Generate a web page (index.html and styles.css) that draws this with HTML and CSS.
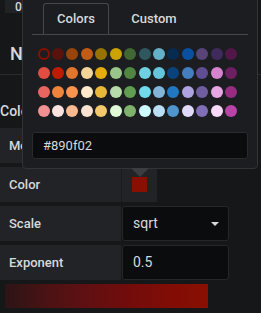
FILE: index.html
```html
<!DOCTYPE html>
<html>
<head>
<meta charset="utf-8">
<link rel="stylesheet" href="styles.css">
</head>
<body>
<div class="page">
  <div class="top-input">0</div>
  <h2 class="heading">Null value</h2>
  <div class="sep"></div>
  <h3 class="section">Colors</h3>
  <div class="form-row">
    <div class="label">Mode</div>
    <div class="select">opacity<span class="caret"></span></div>
  </div>
  <div class="form-row">
    <div class="label">Color</div>
    <div class="swatch-cell"><span class="swatch"></span></div>
  </div>
  <div class="form-row">
    <div class="label">Scale</div>
    <div class="select">sqrt<span class="caret"></span></div>
  </div>
  <div class="form-row">
    <div class="label">Exponent</div>
    <div class="select">0.5</div>
  </div>
  <div class="legend"></div>
</div>

<div class="popover">
  <div class="tabs">
    <div class="tab active">Colors</div>
    <div class="tab second">Custom</div>
  </div>
  <div class="palette">
    <span class="dot ring" style="border-color:#890F02"></span>
    <span class="dot" style="background:#58140C"></span>
    <span class="dot" style="background:#99440A"></span>
    <span class="dot" style="background:#C15C17"></span>
    <span class="dot" style="background:#967302"></span>
    <span class="dot" style="background:#CCA300"></span>
    <span class="dot" style="background:#3F6833"></span>
    <span class="dot" style="background:#2F575E"></span>
    <span class="dot" style="background:#64B0C8"></span>
    <span class="dot" style="background:#052B51"></span>
    <span class="dot" style="background:#0A50A1"></span>
    <span class="dot" style="background:#584477"></span>
    <span class="dot" style="background:#3F2B5B"></span>
    <span class="dot" style="background:#511749"></span>

    <span class="dot" style="background:#E24D42"></span>
    <span class="dot" style="background:#BF1B00"></span>
    <span class="dot" style="background:#E0752D"></span>
    <span class="dot" style="background:#F4D598"></span>
    <span class="dot" style="background:#E5AC0E"></span>
    <span class="dot" style="background:#9AC48A"></span>
    <span class="dot" style="background:#508642"></span>
    <span class="dot" style="background:#6ED0E0"></span>
    <span class="dot" style="background:#65C5DB"></span>
    <span class="dot" style="background:#0A437C"></span>
    <span class="dot" style="background:#447EBC"></span>
    <span class="dot" style="background:#614D93"></span>
    <span class="dot" style="background:#D683CE"></span>
    <span class="dot" style="background:#6D1F62"></span>

    <span class="dot" style="background:#EA6460"></span>
    <span class="dot" style="background:#EF843C"></span>
    <span class="dot" style="background:#F9934E"></span>
    <span class="dot" style="background:#FCEACA"></span>
    <span class="dot" style="background:#EAB839"></span>
    <span class="dot" style="background:#B7DBAB"></span>
    <span class="dot" style="background:#629E51"></span>
    <span class="dot" style="background:#70DBED"></span>
    <span class="dot" style="background:#82B5D8"></span>
    <span class="dot" style="background:#1F78C1"></span>
    <span class="dot" style="background:#AEA2E0"></span>
    <span class="dot" style="background:#705DA0"></span>
    <span class="dot" style="background:#E5A8E2"></span>
    <span class="dot" style="background:#962D82"></span>

    <span class="dot" style="background:#F29191"></span>
    <span class="dot" style="background:#FCE2DE"></span>
    <span class="dot" style="background:#F9BA8F"></span>
    <span class="dot" style="background:#F9E2D2"></span>
    <span class="dot" style="background:#F2C96D"></span>
    <span class="dot" style="background:#E0F9D7"></span>
    <span class="dot" style="background:#7EB26D"></span>
    <span class="dot" style="background:#CFFAFF"></span>
    <span class="dot" style="background:#BADFF4"></span>
    <span class="dot" style="background:#5195CE"></span>
    <span class="dot" style="background:#DEDAF7"></span>
    <span class="dot" style="background:#806EB7"></span>
    <span class="dot" style="background:#F9D9F9"></span>
    <span class="dot" style="background:#BA43A9"></span>
  </div>
  <div class="hex-input">#890f02</div>
  <div class="arrow"></div>
</div>
</body>
</html>
```

FILE: styles.css
```css
* {
  box-sizing: border-box;
}

html,
body {
  margin: 0;
  padding: 0;
}

body {
  width: 261px;
  height: 313px;
  overflow: hidden;
  position: relative;
  background: #161719;
  color: #d8d9da;
  font-family: Roboto, "Liberation Sans", sans-serif;
}

.page {
  display: flex;
  flex-direction: column;
  align-items: flex-start;
}

.top-input {
  margin-left: 5px;
  width: 22px;
  height: 13px;
  padding-left: 10px;
  background: #202226;
  font-size: 12px;
  line-height: 14px;
  font-weight: 500;
  overflow: hidden;
}

.heading {
  margin: 29px 0 0 10px;
  font-size: 18px;
  line-height: 24px;
  font-weight: 500;
  white-space: nowrap;
}

.sep {
  align-self: stretch;
  height: 1px;
  margin-top: 8px;
  background: #2a2b2e;
}

.section {
  margin: 28px 0 0 0;
  font-size: 14px;
  line-height: 16px;
  font-weight: 500;
}

.form-row {
  display: flex;
  height: 35px;
  margin-top: 4px;
}

.section + .form-row {
  margin-top: 9px;
}

.label {
  width: 121px;
  padding-left: 9px;
  background: #212327;
  font-size: 13px;
  line-height: 35px;
  font-weight: 500;
}

.swatch-cell {
  width: 36px;
  display: flex;
  align-items: center;
  justify-content: center;
  background: #212327;
  border-left: 1px solid #1a1b1e;
}

.swatch {
  width: 15px;
  height: 15px;
  background: #890f02;
}

.select {
  position: relative;
  width: 107px;
  margin-left: 1px;
  padding-left: 10px;
  background: #0b0c0e;
  border: 1px solid #26272b;
  border-radius: 3px;
  font-size: 14px;
  line-height: 33px;
}

.caret {
  position: absolute;
  right: 9px;
  top: 15px;
  border-left: 4px solid transparent;
  border-right: 4px solid transparent;
  border-top: 4px solid #d8d9da;
}

.legend {
  margin: 4px 0 0 5px;
  width: 203px;
  height: 24px;
  background: linear-gradient(to right, #2c1416 0%, #4a1214 20%, #5e1012 38%, #730c0b 62%, #820d05 82%, #890f02 100%);
}

/* popover */
.popover {
  position: absolute;
  left: 22px;
  top: -6px;
  width: 236px;
  padding: 8px 9px 9px;
  background: #1c1d20;
  border: 1px solid #323336;
  border-radius: 4px;
}

.tabs {
  display: flex;
  padding-left: 11px;
  border-bottom: 1px solid #46474a;
}

.tab {
  padding: 7px 0;
  font-size: 13px;
  line-height: 16px;
  font-weight: 500;
  text-align: center;
  border: 1px solid transparent;
  border-bottom: none;
  border-radius: 3px 3px 0 0;
}

.tab.active {
  width: 66px;
  border-color: #46474a;
}

.tab.second {
  width: 72px;
  margin-left: 9px;
}

.palette {
  display: grid;
  grid-template-columns: repeat(14, 12px);
  column-gap: 2.44px;
  row-gap: 7px;
  margin-top: 13px;
  padding-left: 5.5px;
}

.dot {
  width: 12px;
  height: 12px;
  border-radius: 50%;
}

.dot.ring {
  border: 2px solid;
  background: transparent;
}

.hex-input {
  margin-top: 15px;
  height: 27px;
  padding-left: 10px;
  background: #0b0c0e;
  border: 1px solid #2a2b2f;
  border-radius: 3px;
  font-size: 13px;
  line-height: 25px;
}

.arrow {
  position: absolute;
  top: 100%;
  left: 108px;
  border-left: 9px solid transparent;
  border-right: 9px solid transparent;
  border-top: 9px solid #3c3d40;
}
```
